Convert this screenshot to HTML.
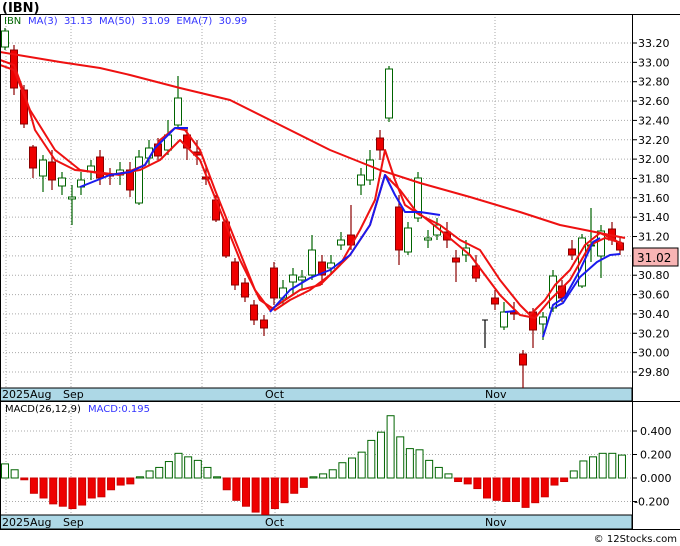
<!DOCTYPE html>
<html><head><meta charset="utf-8"><style>
body{margin:0;background:#fff;width:680px;height:546px;overflow:hidden;font-family:"DejaVu Sans","Liberation Sans",sans-serif}
svg{display:block}
</style></head><body>
<svg id="s" width="680" height="546" xmlns="http://www.w3.org/2000/svg" font-family="DejaVu Sans, Liberation Sans, sans-serif">
<text x="2" y="12" font-size="13" font-weight="bold" fill="#000">(IBN)</text>
<g id="grid"></g>
<rect x="0" y="388" width="632" height="13" fill="#add8e6" stroke="#000" stroke-width="1"/>
<rect x="0" y="515" width="632" height="14" fill="#add8e6" stroke="#000" stroke-width="1"/>
<g font-size="11" fill="#000">
<text x="2" y="398">2025Aug</text><text x="63" y="398">Sep</text><text x="265" y="398">Oct</text><text x="485" y="398">Nov</text>
<text x="2" y="526">2025Aug</text><text x="63" y="526">Sep</text><text x="265" y="526">Oct</text><text x="485" y="526">Nov</text>
</g>
<g id="c"></g>
<g id="m"></g>
<line x1="0" y1="14.5" x2="680" y2="14.5" stroke="#000"/>
<line x1="632.5" y1="14" x2="632.5" y2="529" stroke="#000"/>
<line x1="0.5" y1="14" x2="0.5" y2="529" stroke="#000"/>
<line x1="0" y1="529.5" x2="680" y2="529.5" stroke="#000"/>
<line x1="0" y1="401.5" x2="680" y2="401.5" stroke="#000"/>
<text x="4" y="24" font-size="10" fill="#006400">IBN</text>
<text x="28" y="24" font-size="10" fill="#3333ff" xml:space="preserve">MA(3)  31.13  MA(50)  31.09  EMA(7)  30.99</text>
<text x="5" y="412" font-size="10" fill="#000">MACD(26,12,9)</text>
<text x="88" y="412" font-size="10" fill="#3333ff">MACD:0.195</text>
<text x="677" y="542" font-size="10" fill="#000" text-anchor="end">© 12Stocks.com</text>
</svg>
<script>
var NS="http://www.w3.org/2000/svg";
function el(p,t,a){var e=document.createElementNS(NS,t);for(var k in a)e.setAttribute(k,a[k]);p.appendChild(e);return e;}
var g=document.getElementById('grid'),s=document.getElementById('s');
function py(p){return 43+(33.2-p)*96.76;}
for(var i=0;i<=17;i++){var p=33.2-i*0.2,y=py(p);
 el(g,'line',{x1:0,x2:632,y1:y,y2:y,stroke:'#aaa','stroke-dasharray':'1,2'});
 el(g,'line',{x1:632,x2:637,y1:y,y2:y,stroke:'#000'});
 var t=el(s,'text',{x:638,y:y+4,'font-size':11,fill:'#000'});t.textContent=p.toFixed(2);}
[6,71,202,275,495].forEach(function(x){el(g,'line',{x1:x,x2:x,y1:14,y2:388,stroke:'#aaa','stroke-dasharray':'1,2'});el(g,'line',{x1:x,x2:x,y1:401,y2:515,stroke:'#aaa','stroke-dasharray':'1,2'});});
function my(m){return 478-m*117.5;}
[0.4,0.2,0,-0.2].forEach(function(m){var y=my(m);el(g,'line',{x1:0,x2:632,y1:y,y2:y,stroke:'#aaa','stroke-dasharray':'1,2'});el(g,'line',{x1:632,x2:637,y1:y,y2:y,stroke:'#000'});var t=el(s,'text',{x:m<0?634:640,y:y+4,'font-size':11,fill:'#000'});t.textContent=m.toFixed(3);});
var C=[[5,31,47,28,50,'g'],[14,50,88,45,95,'r'],[24,90,124,85,128,'r'],[33,147,168,145,178,'r'],[43,160,176,155,192,'g'],[52,162,180,150,190,'r'],[62,178,186,172,195,'g'],[72,197,199,185,225,'g'],[81,180,187,172,195,'g'],[91,166,172,160,180,'g'],[100,157,178,150,185,'r'],[110,174,176,168,185,'r'],[120,170,175,162,185,'g'],[130,170,190,162,197,'r'],[139,157,203,150,205,'g'],[149,148,158,140,165,'g'],[158,144,156,138,160,'r'],[168,135,150,120,155,'g'],[178,98,125,76,128,'g'],[187,135,148,128,160,'r'],[197,152,155,140,165,'r'],[206,177,179,165,185,'r'],[216,200,220,195,222,'r'],[226,222,256,218,258,'r'],[235,262,285,258,290,'r'],[245,283,297,278,302,'r'],[254,305,320,300,325,'r'],[264,320,328,315,336,'r'],[274,268,298,262,305,'r'],[283,288,298,280,305,'g'],[293,275,282,268,295,'g'],[302,277,280,270,290,'g'],[312,250,275,235,280,'g'],[322,262,275,255,285,'r'],[331,263,268,255,275,'g'],[341,240,245,232,250,'g'],[351,235,245,205,250,'r'],[361,175,185,168,195,'g'],[370,160,180,150,185,'g'],[380,138,150,130,160,'r'],[389,69,118,66,122,'g'],[399,207,250,195,265,'r'],[408,228,252,222,255,'g'],[418,178,218,172,222,'g'],[428,238,240,230,248,'g'],[437,225,235,218,240,'g'],[447,232,240,222,248,'r'],[456,258,262,250,282,'r'],[466,248,255,240,262,'g'],[476,266,278,255,282,'r'],[485,320,321,320,348,'k'],[495,298,304,290,310,'r'],[504,312,327,302,330,'g'],[514,312,314,302,320,'r'],[523,354,365,350,388,'r'],[533,312,330,308,348,'r'],[543,317,324,312,340,'g'],[553,276,308,270,312,'g'],[562,286,298,280,302,'r'],[572,249,255,240,260,'r'],[582,238,286,234,288,'g'],[591,245,246,208,262,'g'],[601,231,256,225,278,'g'],[612,229,240,222,245,'r'],[620,243,250,238,255,'r']];
var cg=document.getElementById('c');
C.forEach(function(c){var col=c[5]=='g'?'#006400':(c[5]=='r'?'#8b0000':'#000');
 el(cg,'line',{x1:c[0],x2:c[0],y1:c[3],y2:c[4],stroke:col,'stroke-width':1.2});
 if(c[5]=='k'){el(cg,'line',{x1:c[0]-3,x2:c[0]+3,y1:c[1],y2:c[1],stroke:'#000'});return;}
 el(cg,'rect',{x:c[0]-3.5,y:c[1],width:7,height:Math.max(1,c[2]-c[1]),fill:c[5]=='g'?'#fff':'#ee0000',stroke:col,'stroke-width':1});});
function pl(pts,col){el(cg,'polyline',{points:pts.map(function(p){return p.join(',')}).join(' '),fill:'none',stroke:col,'stroke-width':2,'stroke-linejoin':'round'});}
pl([[0,52],[60,62],[100,68],[130,75],[180,88],[230,100],[280,125],[330,150],[380,170],[420,183],[470,197],[520,212],[560,225],[600,233],[625,238]],'#ee1111');
pl([[0,60],[14,65],[25,95],[35,130],[55,160],[75,170],[95,172],[120,175],[145,165],[160,140],[175,128],[185,130],[200,150],[215,190],[235,240],[255,290],[270,310],[285,300],[300,290],[320,285],[340,265],[360,230],[375,200],[385,150],[395,180],[405,205],[420,215],[440,225],[460,240],[480,250],[500,280],[520,305],[530,315],[545,300],[555,285],[570,270],[585,245],[600,233],[615,240],[622,245]],'#ee1111');
pl([[0,65],[14,70],[30,110],[55,150],[80,170],[110,175],[140,170],[160,160],[180,140],[200,160],[220,210],[240,260],[260,300],[275,310],[290,300],[310,290],[330,275],[350,255],[370,225],[385,175],[400,190],[415,210],[440,230],[470,255],[500,295],[520,315],[535,318],[550,300],[570,280],[590,245],[605,238],[622,243]],'#ee1111');
pl([[80,187],[110,175],[130,172],[145,165],[155,148],[175,128],[188,128]],'#1a1aee');
pl([[270,312],[290,290],[310,278],[330,270],[350,255],[370,225],[385,175],[395,195],[405,212],[420,212],[440,215]],'#1a1aee');
pl([[505,312],[515,311]],'#1a1aee');
pl([[543,337],[553,305],[565,297],[580,270],[593,242],[600,238]],'#1a1aee');
pl([[555,307],[563,303],[580,277],[597,262],[610,255],[620,254]],'#1a1aee');
var M=[.12,.07,-.015,-.13,-.17,-.22,-.24,-.26,-.23,-.17,-.16,-.10,-.06,-.05,.01,.06,.09,.14,.21,.18,.15,.09,.01,-.10,-.19,-.24,-.29,-.31,-.26,-.21,-.13,-.08,.01,.035,.07,.13,.17,.22,.32,.39,.53,.35,.25,.24,.15,.09,.035,-.03,-.05,-.09,-.17,-.19,-.20,-.20,-.25,-.21,-.16,-.06,-.03,.06,.145,.18,.21,.21,.195];
var mg=document.getElementById('m');
M.forEach(function(v,i){var x=5+i*9.64,y0=my(0),y1=my(v);
 var r=v<0;el(mg,'rect',{x:x-3.5,y:Math.min(y0,y1),width:7,height:Math.max(1,Math.abs(y1-y0)),fill:r?'#ee0000':'#fff',stroke:r?'#cc0000':'#006400','stroke-width':1});});
el(s,'rect',{x:633,y:248,width:45,height:18,fill:'#f8b4b4',stroke:'#000'});
var lt=el(s,'text',{x:637,y:262,'font-size':12,fill:'#000'});lt.textContent='31.02';
</script>
</body></html>
